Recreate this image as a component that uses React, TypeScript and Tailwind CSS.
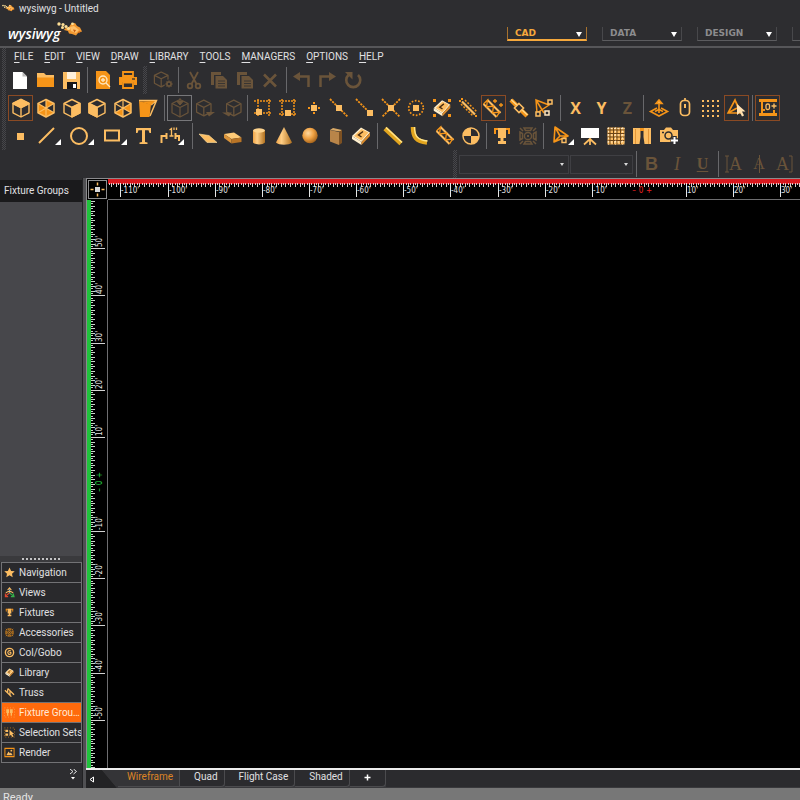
import { useEffect, useState } from "react";
import type { ReactNode } from "react";
import { clsx } from "clsx";

const L = "#fcbd62";
const D = "#f59418";
const M = "#6a543a";
const W = "#ffffff";
const BG = "#2d2d30";

/* ---------- icon primitives ---------- */

function Cube({ c = L, fill = [], sw = 1.4 }: { c?: string; fill?: string[]; sw?: number }) {
  const faces: Record<string, string> = {
    top: "M12 3.5 20 7.5 12 11.5 4 7.5Z",
    left: "M4 7.5 12 11.5V21L4 16.8Z",
    right: "M20 7.5 12 11.5V21L20 16.8Z",
  };
  return (
    <g stroke={c} strokeWidth={sw} strokeLinejoin="round" fill="none">
      {fill.map((f) => (
        <path key={f} d={faces[f]} fill={c} />
      ))}
      <path d="M12 3.5 20 7.5V16.8L12 21 4 16.8V7.5Z" />
      <path d="M4 7.5 12 11.5 20 7.5M12 11.5V21" />
    </g>
  );
}

function Iso({ sectors }: { sectors: string }) {
  return (
    <g strokeLinejoin="round">
      <path d={sectors} fill={D} />
      <path d="M12 3.5 20 7.5V16.8L12 21 4 16.8V7.5Z" stroke={L} strokeWidth="1.5" fill="none" />
      <path d="M12 3.5V21M4 7.5 20 16.8M20 7.5 4 16.8" stroke={L} strokeWidth="1.2" />
    </g>
  );
}

function Dots({ pts, c = D, s = 2 }: { pts: number[][]; c?: string; s?: number }) {
  return (
    <g fill={c}>
      {pts.map(([x, y], i) => (
        <rect key={i} x={x - s / 2} y={y - s / 2} width={s} height={s} />
      ))}
    </g>
  );
}

const Sq = ({ x, y, s = 6 }: { x: number; y: number; s?: number }) => (
  <rect x={x - s / 2} y={y - s / 2} width={s} height={s} fill={L} />
);

const Fly = ({ x = 20 }: { x?: number }) => <path d={`M${x + 6} 15v6h-6z`} fill={W} />;

const Truss = () => (
  <g stroke={L} fill="none">
    <path d="M3.5 7 16.5 20M7.5 3 20.5 16" strokeWidth="2" />
    <path d="M3.5 7 7.500 3 6.500 10 13.500 9 12.500 16 19.500 15 16.500 20" stroke={D} strokeWidth="1.300" />
  </g>
);

const Book = () => (
  <g>
    <path d="M3 12 12 3.500 21 8.500 12.500 18Z" fill="#fff0cf" />
    <path d="M5 12 12.500 5 19.500 8.500 12.500 16.500Z" fill={L} />
    <path d="M3 12 12.500 18V21L3 15Z" fill="#fff0cf" />
    <path d="M12.500 18 21 8.500V12L12.500 21Z" fill="#d98a2c" />
    <path d="M14 7.500 9.500 11l3 2" stroke="#4a2d10" strokeWidth="1.500" fill="none" />
  </g>
);

const Trophy = () => (
  <g>
    <path d="M4 5H20M5 4v6M19 4v6" stroke={D} strokeWidth="2" fill="none" />
    <path d="M8 4h8v10h-2.500v3H16v3H8v-3h2.500v-3H8z" fill={L} />
  </g>
);

const Lamp = ({ c = M }: { c?: string }) => (
  <g stroke={c} fill="none" strokeWidth="1.500">
    <circle cx="12" cy="12" r="3.600" />
    <path d="M12 11v2" strokeWidth="2" />
    <path d="M8 4h8l-1.500 2.500h-5zM8 20h8l-1.500-2.500h-5zM4 8v8l2.500-1.500v-5zM20 8v8l-2.500-1.500v-5z" />
    <path d="M4 4l3 3M20 4l-3 3M4 20l3-3M20 20l-3-3" />
  </g>
);

const Copy = () => (
  <g fill={M}>
    <path d="M4 4h10v3H7v10H4z" />
    <path d="M8.500 8H16l4 4v8.500H8.500z" />
    <path d="M11 13h7M11 15.500h7M11 18h7" stroke={BG} strokeWidth=".8" />
  </g>
);

const Cone = () => (
  <g stroke={D} strokeWidth="1.600" fill="none" strokeLinejoin="round">
    <path d="M5 3 18 12 4 18ZM5 3l5 9-6 6M10 12h8" />
  </g>
);

/* ---------- toolbar icons ---------- */

const icons: Record<string, ReactNode> = {
  new: (
    <g>
      <path d="M4 4h9.500L18 8.500V21H4z" fill={W} />
      <path d="M13.500 4v4.500H18z" fill="#b9b9b9" />
    </g>
  ),
  open: (
    <g>
      <path d="M3 5h7l2 2h8v3H3z" fill={L} />
      <path d="M3 9.500h17V19H3z" fill={D} />
    </g>
  ),
  save: (
    <g>
      <path d="M3 4h17v17H3z" fill={L} />
      <path d="M7 4h9v7H7z" fill="#fff1dc" />
      <path d="M7 14h10v7H7z" fill="#171719" />
      <path d="M13 16h3v4h-3z" fill={W} />
    </g>
  ),
  preview: (
    <g>
      <path d="M5 3h10l4 4v14H5z" fill={D} />
      <circle cx="12" cy="12" r="4" fill="none" stroke="#ffe6bd" strokeWidth="1.400" />
      <path d="M10 12h4M12 10v4M15 15l4 4" stroke="#ffe6bd" strokeWidth="1.400" />
    </g>
  ),
  print: (
    <g>
      <path d="M7 4h10v4H7z" fill="none" stroke={D} strokeWidth="1.800" />
      <path d="M3 9h18v8h-3v-3H6v3H3z" fill={D} />
      <path d="M7 14.500h10V20H7z" fill="none" stroke={D} strokeWidth="1.800" />
      <path d="M16 11h3" stroke={BG} strokeWidth="1.300" />
    </g>
  ),
  boxgear: (
    <g>
      <g transform="translate(0 1) scale(.85)">
        <Cube c={M} />
      </g>
      <circle cx="18" cy="16" r="4.500" fill={BG} />
      <circle cx="18" cy="16" r="2" fill="none" stroke={M} strokeWidth="1.500" />
      <path d="M18 12.500v1.500M18 18v1.500M14.500 16H16M20 16h1.500M15.500 13.500l1 1M19.500 17.500l1 1M20.500 13.500l-1 1M16.500 17.500l-1 1" stroke={M} strokeWidth="1.300" />
    </g>
  ),
  cut: (
    <g stroke={M} strokeWidth="1.800" fill="none">
      <path d="M8 4 14.500 16M16 4 9.500 16" />
      <circle cx="8" cy="18" r="2.300" />
      <circle cx="16" cy="18" r="2.300" />
    </g>
  ),
  copy: <Copy />,
  del: <path d="M6 6.500 18 18.500M18 6.500 6 18.500" stroke={M} strokeWidth="2.600" />,
  undo: (
    <g>
      <path d="M8 8.500h10.500V19" stroke={M} strokeWidth="2.500" fill="none" />
      <path d="M3 8.500 10 4v9z" fill={M} />
    </g>
  ),
  redo: (
    <g>
      <path d="M16 8.500H5.500V19" stroke={M} strokeWidth="2.500" fill="none" />
      <path d="M21 8.500 14 4v9z" fill={M} />
    </g>
  ),
  refresh: (
    <g>
      <path d="M7.500 7A7 7 0 1 0 17 7" stroke={M} strokeWidth="2.600" fill="none" />
      <path d="M4 4h7.500v7.500z" fill={M} />
    </g>
  ),
  cubeTop: <Cube fill={["top"]} />,
  cubeIso: <Iso sectors="M12 3.500 20 7.500 12 12ZM4 7.500 12 12 4 16.800ZM12 12 12 21 4 16.800ZM12 12 20 16.800 12 21Z" />,
  cubeRight: <Cube fill={["right"]} />,
  cubeLeft: <Cube fill={["left"]} />,
  cubeWire: <Iso sectors="M12 12 20 7.500V16.800ZM12 12 4 16.800 12 21Z" />,
  persp: (
    <g>
      <path d="M3 5 15 8.500 13.500 21H4z" fill={D} />
      <path d="M3 4.500H20.500L14 20M15 9l5.500-4.500" stroke={L} strokeWidth="1.500" fill="none" />
      <path d="M4 5.500 15 9l4-4z" fill={D} />
    </g>
  ),
  cubeOff: (
    <g>
      <Cube c={M} sw={1.2} />
      <path d="M9 5.500h6l-3 3.500zM12 2v4" fill={M} stroke={M} />
    </g>
  ),
  cubeOffR: (
    <g>
      <g transform="translate(-1 1) scale(.9)">
        <Cube c={M} />
      </g>
      <path d="M12 16h9l-6 4.500z" fill={M} />
    </g>
  ),
  cubeOffL: (
    <g>
      <g transform="translate(3 1) scale(.9)">
        <Cube c={M} />
      </g>
      <path d="M12 16.500H2l7 4z" fill={M} />
    </g>
  ),
  snapCorner: (
    <g>
      <path d="M7 3v18M18 3v18M3 5h18M3 17h18" stroke={D} strokeWidth="1.500" strokeDasharray="2 1" />
      <Sq x={8} y={16} />
    </g>
  ),
  snapEdge: (
    <g>
      <path d="M6 3v18M18 3v18M3 5h18M3 18h18" stroke={D} strokeWidth="1.500" strokeDasharray="2 1" />
      <Sq x={12} y={17} />
    </g>
  ),
  snapPoint: (
    <g>
      <Sq x={12} y={12} />
      <Dots pts={[[12, 7], [12, 17], [7, 12], [17, 12]]} />
    </g>
  ),
  snapMid: (
    <g>
      <path d="M3 3 21 21" stroke={D} strokeWidth="1.800" strokeDasharray="2.200 1" />
      <Sq x={12} y={12} />
    </g>
  ),
  snapEnd: (
    <g>
      <path d="M3 3 16 16" stroke={D} strokeWidth="1.800" strokeDasharray="2.200 1" />
      <Sq x={17} y={17} />
    </g>
  ),
  snapCross: (
    <g>
      <path d="M3 3 21 21M21 3 3 21" stroke={D} strokeWidth="1.800" strokeDasharray="2.200 1" />
      <Sq x={12} y={12} />
    </g>
  ),
  snapCircle: (
    <g>
      <circle cx="12" cy="12" r="7.300" stroke={D} strokeWidth="1.700" strokeDasharray="1.700 1.600" fill="none" />
      <Sq x={12} y={12} />
    </g>
  ),
  snapBook: (
    <g>
      <g transform="translate(1 1) scale(.92)">
        <Book />
      </g>
      <Dots s={3} pts={[[4.5, 4.5], [19.5, 4.5], [4.5, 19.5], [19.5, 19.5]]} />
    </g>
  ),
  snapTruss: (
    <g>
      <path d="M5 8 17 20M9 4 21 16" stroke={D} strokeWidth="1.500" strokeDasharray="2 1.500" />
      <path d="M6 5.500 19 18.500" stroke={L} strokeWidth="2.200" />
      <Dots pts={[[4, 5], [6, 3], [20, 20]]} />
    </g>
  ),
  trussOn: (
    <g>
      <g transform="translate(-1 1)">
        <Truss />
      </g>
      <path d="M12 5h4M14 3v4M18 9h4M20 7v4" stroke={D} strokeWidth="1.300" />
    </g>
  ),
  pipeSnap: (
    <g>
      <path d="M4 4 20 20" stroke={D} strokeWidth="4.500" />
      <path d="M4 3.500 20.500 19" stroke="#ffd98a" strokeWidth="1.500" />
      <path d="M12 7.500 16.500 12 12 16.500 7.500 12Z" fill={BG} stroke={L} strokeWidth="1.600" />
    </g>
  ),
  lightSnap: (
    <g fill={BG} strokeWidth="1.500">
      <path d="M4 4 17 9 5 17ZM4 4l8 13" stroke={D} />
      <path d="M16 4h4v4h-4zM4 16h4v4H4z" stroke={L} />
      <path d="M13 15h4v4h-4z" stroke="#ffe6bd" />
    </g>
  ),
  level: (
    <g stroke={D} fill="none" strokeWidth="1.600">
      <path d="M10 12 3.500 15.500 12 20 20.500 15.500 14 12" />
      <path d="M12 17V6" />
      <path d="M9 7.500 12 4l3 3.500z" fill={L} />
      <path d="M8 15.500 12 13.500l4 2" />
    </g>
  ),
  mouse: (
    <g stroke={L} fill="none" strokeWidth="1.700">
      <rect x="7.500" y="4.500" width="9" height="15" rx="3.500" />
      <path d="M12 8v4" strokeWidth="2" />
      <path d="M12 2v2" />
    </g>
  ),
  grid: <Dots c={L} s={2} pts={[4, 9, 14, 19].flatMap((x) => [5, 10, 15, 20].map((y) => [x, y]))} />,
  pick: (
    <g>
      <path d="M10 4 3 17h12zM10 4l5 10M3 17l9-5" stroke={D} strokeWidth="1.600" fill="none" />
      <path d="M12 8v11l3-2.500 2 4 2-1-2-4h3.500z" fill="#ffe0b0" />
    </g>
  ),
  trussCount: (
    <g stroke={D} fill="none" strokeWidth="2">
      <path d="M3 4.500h18M3 18.500h18" strokeWidth="3" />
      <path d="M6 4v15M5 14h4M18 14v4" />
      <path d="M15.500 10h5M18 7.500v5" stroke={L} strokeWidth="1.400" />
      <rect x="10" y="8" width="3.500" height="5.500" rx="1.500" stroke={L} strokeWidth="1.300" />
    </g>
  ),
  dot: <Sq x={11.5} y={12.5} s={7} />,
  type: <path d="M4 4h15v5h-1.500l-1-2.700H13V18l2.500.5V20h-8v-1.500L10 18V6.300H6.500L5.500 9H4z" fill={L} />,
  plane: <path d="M3 10 13 11.500 21 18.500H11Z" fill={L} stroke="#ffe0a0" strokeWidth=".6" />,
  slab: (
    <g>
      <path d="M3 10 13 8.500 20.500 13.500 10.500 15Z" fill="#ffcb78" />
      <path d="M3 10 10.500 15v4.500L3 14z" fill="#d9933a" />
      <path d="M10.500 15 20.500 13.500V18L10.500 19.500z" fill="#b87426" />
    </g>
  ),
  cylinder: (
    <g>
      <path d="M6 6.500v12c2 2.500 10 2.500 12 0v-12z" fill="url(#amberH)" />
      <ellipse cx="12" cy="6.500" rx="6" ry="2.200" fill="#ffd48e" />
    </g>
  ),
  cone: <path d="M12 3 4 18.500c3 3 13 3 16 0z" fill="url(#amberH)" />,
  sphere: <circle cx="12" cy="11.500" r="7.700" fill="url(#amberR)" />,
  door: (
    <g>
      <path d="M6 6 9 4 18 6 16 7.500Z" fill="#d8a866" />
      <path d="M6 6l9 2V21L6 17.500z" fill="#b98549" />
      <path d="M15 8l3-2v13l-3 2z" fill="#7d5122" />
    </g>
  ),
  book: <Book />,
  pipe: (
    <g>
      <path d="M4 4.500 20 19.500" stroke="#e2a51e" strokeWidth="4.500" />
      <path d="M5 3.500 21 18.500" stroke="#ffe48c" strokeWidth="1.500" />
    </g>
  ),
  bend: (
    <g fill="none">
      <path d="M6 3c0 10 3 14.500 14 15.500" stroke="#e2a51e" strokeWidth="4.500" />
      <path d="M7.500 3c0 9 3 13 13 14" stroke="#ffe48c" strokeWidth="1.400" />
    </g>
  ),
  truss: <Truss />,
  target: (
    <g>
      <circle cx="12" cy="12" r="8" fill={BG} stroke={L} strokeWidth="1.500" />
      <path d="M12 12V4a8 8 0 0 0-8 8zM12 12v8a8 8 0 0 0 8-8z" fill={L} />
    </g>
  ),
  trophy: <Trophy />,
  lamp: <Lamp />,
  screen: (
    <g>
      <path d="M3 4h18v10H3z" fill={W} />
      <path d="M12 14v7M12 15l-6 5.500M12 15l6 5.500" stroke={L} strokeWidth="1.700" />
    </g>
  ),
  mesh: (
    <g>
      <path d="M3.500 3.500h17v17h-17z" fill={L} />
      <path
        d="M3.500 6h17M3.500 9.500h17M3.500 13h17M3.500 16.500h17M6 3.500v17M9.500 3.500v17M13 3.500v17M16.500 3.500v17"
        stroke="#6b4417"
        strokeWidth="1"
      />
      <path d="M3.500 4.500h17M3.500 11h17M3.500 18h17M4.500 3.500v17M11.500 3.500v17M18.500 3.500v17" stroke="#ffe8c4" strokeWidth="1" strokeDasharray="1.500 1.800" />
    </g>
  ),
  curtain: (
    <g fill={L}>
      <path d="M3 4h7.500v9L9.500 20H3zM13.500 4H21v16h-6.500L13.500 13z" />
      <path d="M10 4h4v3h-4z" fill={D} />
      <path d="M5.500 5v15M18.500 5v15" fill="none" stroke="#d98a2c" strokeWidth=".8" />
    </g>
  ),
  camera: (
    <g>
      <path d="M3 6h4l2-2.500h5L16 6h5v12H3z" fill={L} />
      <circle cx="11.500" cy="11.500" r="3.500" fill="none" stroke={BG} strokeWidth="1.500" />
      <path d="M5 8.500h2" stroke={BG} strokeWidth="1.500" />
      <path d="M17.500 12v8M13.500 16.500h8" stroke={BG} strokeWidth="4.500" />
      <path d="M17.500 13v7M14 16.500h7" stroke={W} strokeWidth="2" />
    </g>
  ),
};

const wideIcons: Record<string, ReactNode> = {
  line: (
    <g>
      <path d="M4 19 19 4" stroke={L} strokeWidth="2" />
      <Fly />
    </g>
  ),
  circle: (
    <g>
      <circle cx="12" cy="12" r="8" stroke={L} strokeWidth="2" fill="none" />
      <Fly x={21} />
    </g>
  ),
  rect: (
    <g>
      <path d="M5 6.500h14v10H5z" stroke={L} strokeWidth="2" fill="none" />
      <Fly x={21} />
    </g>
  ),
  dim: (
    <g stroke={L} strokeWidth="2" fill="none">
      <path d="M2.500 19v-7H8M7.500 9v6M16.500 9v6M16 12h4v5" />
      <path d="M10.500 6 12.500 4.500V12M10.500 12h4M15 3.500v2.500M17.500 3.500v2.500" strokeWidth="1.300" />
      <g stroke="none">
        <Fly x={19} />
      </g>
    </g>
  ),
  spot: (
    <g>
      <g transform="translate(4 0)">
        <Cone />
      </g>
      <path d="M16 14.500h4v4h-4z" fill={BG} stroke={L} strokeWidth="1.400" />
      <Fly x={22} />
    </g>
  ),
};

/* ---------- toolbar parts ---------- */

function Tool({ name, on, frame }: { name: string; on?: boolean; frame?: boolean }) {
  const wide = wideIcons[name];
  return (
    <button
      type="button"
      aria-label={name}
      className={clsx(
        "flex h-[26px] shrink-0 items-center justify-center border",
        wide ? "w-[30px]" : "w-[25px]",
        on ? "border-[#8a4a24]" : frame ? "border-[#77777a]" : "border-transparent",
      )}
    >
      {wide ? (
        <svg viewBox="0 0 30 24" className="h-6 w-[30px] shrink-0">{wide}</svg>
      ) : (
        <svg viewBox="0 0 24 24" className="size-6 shrink-0">{icons[name]}</svg>
      )}
    </button>
  );
}

function Letter({ label, children, off, className }: { label: string; children: ReactNode; off?: boolean; className: string }) {
  return (
    <button
      type="button"
      aria-label={label}
      className={clsx("flex h-[26px] w-[25px] shrink-0 items-center justify-center", off ? "text-[#6a543a]" : "text-[#fcbd62]", className)}
    >
      {children}
    </button>
  );
}

const Group = ({ className, children }: { className: string; children: ReactNode }) => (
  <div className={clsx("flex shrink-0 justify-between", className)}>{children}</div>
);

const Sep = () => (
  <div className="flex w-[6px] shrink-0 justify-center">
    <div className="h-[26px] w-px bg-[#68686b]" />
  </div>
);

const Grip = ({ className }: { className: string }) => (
  <div className={clsx("flex h-full shrink-0 items-center justify-center", className)}>
    <div className="h-full w-1 bg-[conic-gradient(#47474b_25%,transparent_25%_50%,#47474b_50%_75%,transparent_75%)] bg-[size:2px_2px]" />
  </div>
);

const tools = (names: string) => names.split(" ").map((n, i) => <Tool key={i} name={n} />);

function Splash({ className }: { className: string }) {
  return (
    <svg viewBox="0 0 26 16" className={className} aria-hidden="true">
      <path d="M8 6.500l4-1.500 2-3 4-1 2 3 3 1.500 2 4-4 1.500-2 2.500-4-1.500-3-.5-1-2.500-4-1z" fill="#f39a32" />
      <path d="M13 5l4-1 5 4-3 3-5-2z" fill="#ffc069" />
      <path d="M16 7.500l3 .5-1.500 2.500zM21 10l3-1-2 2.500z" fill="#c85d12" />
      <g fill="#ffdf95">
        <circle cx="2" cy="2" r="1.700" />
        <circle cx="6" cy="2.500" r="1.600" />
        <circle cx="5.500" cy="5.500" r="1.500" />
        <circle cx="9" cy="4.500" r="1.600" />
        <circle cx="11.500" cy="6.500" r="1.600" />
        <circle cx="15.500" cy="1.800" r="1.400" />
      </g>
    </svg>
  );
}

const workspaces = ["CAD", "DATA", "DESIGN", "PRES"];

function Workspace({ name, active }: { name: string; active: boolean }) {
  return (
    <label
      className={clsx(
        "flex h-[14px] w-20 shrink-0 items-center border-x pr-1",
        active ? "border-b-2 border-x-[#a8722e] border-b-[#f5a83c]" : "border-b border-x-[#48484b] border-b-[#5c5c5f]",
      )}
    >
      <select
        aria-label={`${name} workspace`}
        className={clsx(
          "h-[13px] min-w-0 flex-1 appearance-none bg-transparent pl-[7px] font-['DejaVu_Sans',sans-serif] text-[9px] leading-[13px] font-bold outline-none",
          active ? "text-[#f5a83c]" : "text-[#8c8c8e]",
        )}
      >
        <option>{name}</option>
      </select>
      <svg viewBox="0 0 6 5" className="mt-[2px] h-[5px] w-[6px]"><path d="M0 0h6L3 5z" fill="#fff" /></svg>
    </label>
  );
}

const menus = ["FILE", "EDIT", "VIEW", "DRAW", "LIBRARY", "TOOLS", "MANAGERS", "OPTIONS", "HELP"];

/* ---------- sidebar ---------- */

const sections: { label: string; icon: ReactNode }[] = [
  { label: "Navigation", icon: <path d="M12 1l3.500 7.500 8 .5-6 5.500L19 22.500 12 18l-7 4.500 1.500-8L.5 9l8-.5z" fill={L} /> },
  {
    label: "Views",
    icon: (
      <g fill="none" strokeWidth="2.400">
        <path d="M12 5v8" stroke="#6cb6e8" />
        <path d="M12 13l9 7M20 14l2 7-7 0" stroke="#35b04a" />
        <path d="M12 13l-9 7M3 14v7h6" stroke="#e0482e" />
        <path d="M4 13q8-7 16 0M8 7l4-5 4 5" stroke={L} />
      </g>
    ),
  },
  { label: "Fixtures", icon: <Trophy /> },
  { label: "Accessories", icon: <Lamp c={D} /> },
  {
    label: "Col/Gobo",
    icon: (
      <g fill="none" stroke={L} strokeWidth="3">
        <circle cx="12" cy="12" r="9" />
        <path d="M15 9a4 4 0 1 0 0 6v-3h-3" strokeWidth="2.400" />
      </g>
    ),
  },
  { label: "Library", icon: <Book /> },
  {
    label: "Truss",
    icon: <path d="M2 7 16 21M8 3 22 17M8 13V5M13 18V9" stroke={L} strokeWidth="2.800" fill="none" />,
  },
  {
    label: "Fixture Groups",
    icon: (
      <g fill={L}>
        <path d="M5 5h6v8H9.500v6h-3v-6H5zM13 5h6v8h-1.500v6h-3v-6H13z" />
        <path d="M1 2h22v20H1z" fill="none" stroke="#ffae5c" strokeWidth="1.500" strokeDasharray="2 4" />
      </g>
    ),
  },
  {
    label: "Selection Sets",
    icon: (
      <g fill={L}>
        <path d="M3 6h6v5H3zM3 14h6v5H3z" />
        <path d="M12 6v14l3-3 3 5 3-1.500-3-5h4z" />
        <path d="M1 2h22v20H1z" fill="none" stroke={D} strokeWidth="1.500" strokeDasharray="2 4" />
      </g>
    ),
  },
  {
    label: "Render",
    icon: (
      <g>
        <path d="M2 3h20v18H2z" fill="none" stroke={D} strokeWidth="2.200" />
        <path d="M5 18l5-8 3 4 2-2 4 6z" fill={L} />
        <circle cx="16" cy="8" r="2" fill={L} />
      </g>
    ),
  },
];

function Sidebar() {
  return (
    <aside className="flex w-[82px] shrink-0 flex-col pt-[2px]">
      <h2 className="h-[22px] bg-[#1a1a1c] pl-1 leading-[21px] whitespace-nowrap">Fixture Groups</h2>
      <div className="min-h-0 flex-1 bg-[#47474b]" />
      <div className="flex h-[6px] items-center justify-center gap-[2px] bg-[#3a3a3d]">
        {Array.from({ length: 10 }, (_, i) => (
          <span key={i} className="size-[2px] bg-[#c4c4c6]" />
        ))}
      </div>
      <ul className="ml-px border-x border-t border-[#727275]">
        {sections.map(({ label, icon }) => {
          const active = label === "Fixture Groups";
          return (
            <li key={label} className="h-5 border-b border-[#727275]">
              <button
                type="button"
                className={clsx("flex h-full w-full items-center gap-1 overflow-hidden pl-[2px] text-left whitespace-nowrap", active ? "bg-[#ff6a0c] text-[#ffe9d6]" : "bg-[#29292c]")}
              >
                <svg viewBox="0 0 24 24" className="size-[11px] shrink-0">{icon}</svg>
                <span className={active ? "truncate" : ""}>{label}</span>
              </button>
            </li>
          );
        })}
      </ul>
      <div className="flex h-[25px] justify-end pt-[6px] pr-[5px]">
        <svg viewBox="0 0 8 12" className="h-3 w-2">
          <path d="M1 0l3 2.500L1 5M4.500 0l3 2.500-3 2.500" stroke="#e8e8e8" fill="none" />
          <path d="M2 8h4L4 10.500z" fill="#fff" />
        </svg>
      </div>
    </aside>
  );
}

/* ---------- rulers ---------- */

const UNIT = 4.715;
const RULER_FONT = "'DejaVu Sans Condensed','DejaVu Sans',sans-serif";

function useWindowSize() {
  const [size, setSize] = useState({ w: window.innerWidth, h: window.innerHeight });
  useEffect(() => {
    const update = () => setSize({ w: window.innerWidth, h: window.innerHeight });
    window.addEventListener("resize", update);
    return () => window.removeEventListener("resize", update);
  }, []);
  return size;
}

const decades = Array.from({ length: 120 }, (_, i) => (i - 60) * 10).filter((v) => v !== 0);

function HRuler({ length }: { length: number }) {
  const x0 = 531;
  const at = (v: number) => Math.round(x0 + v * UNIT);
  const ticks = Array.from({ length: 900 }, (_, i) => i - 225);
  const labels = decades.filter((v) => at(v) > 0 && at(v) < length - 18);
  return (
    <svg className="block h-full w-full" shapeRendering="crispEdges">
      <rect width="100%" height="5" fill="#d8181e" />
      <path d={ticks.map((t) => `M${at(t / 2)} 4v${t % 2 ? 2 : 4}`).join("")} stroke="#dccaca" transform="translate(.5 0)" />
      <path d={labels.map((v) => `M${at(v)} 4v14`).join("")} stroke="#e6e6e6" transform="translate(.5 0)" />
      <g fill="#e2e2e2" fontSize="8" fontFamily={RULER_FONT}>
        {labels.map((v) => (
          <text key={v} x={at(v) + 1} y="14">{`${v}'`}</text>
        ))}
        <g fill="#f02020" textAnchor="middle">
          <text x={x0 - 5} y="14">–</text>
          <text x={x0 + 2} y="14">0</text>
          <text x={x0 + 10} y="14">+</text>
        </g>
      </g>
    </svg>
  );
}

function VRuler({ length }: { length: number }) {
  const y0 = 284;
  const at = (v: number) => Math.round(y0 - v * UNIT);
  const ticks = Array.from({ length: 700 }, (_, i) => 120 - i);
  const labels = decades.filter((v) => at(v) > 16 && at(v) < length - 2);
  return (
    <svg className="block h-full w-full" shapeRendering="crispEdges">
      <rect width="4" height="100%" fill="#20c23c" />
      <path d={ticks.map((t) => `M4 ${at(t / 2)}h${t % 2 ? 2 : 4}`).join("")} stroke="#c8d8c8" transform="translate(0 .5)" />
      <path d={labels.map((v) => `M4 ${at(v)}h14`).join("")} stroke="#d2d2d2" transform="translate(0 .5)" />
      <g fill="#e2e2e2" fontSize="8" fontFamily={RULER_FONT}>
        {labels.map((v) => (
          <text key={v} transform={`translate(15 ${at(v) - 1}) rotate(-90)`}>{`${v}'`}</text>
        ))}
        <g fill="#24d444" textAnchor="middle">
          <text transform={`translate(15 ${y0 + 6}) rotate(-90)`}>–</text>
          <text transform={`translate(15 ${y0 - 1}) rotate(-90)`}>0</text>
          <text transform={`translate(15 ${y0 - 9}) rotate(-90)`}>+</text>
        </g>
      </g>
    </svg>
  );
}

function Canvas() {
  const { w, h } = useWindowSize();
  return (
    <div className="grid min-h-0 flex-1 grid-cols-[21px_1fr] grid-rows-[21px_1fr] border-t border-l border-[#8b8b8e] bg-black">
      <div className="flex items-start justify-start pt-px pl-px">
        <button type="button" aria-label="Origin" className="flex h-[19px] w-[19px] items-center justify-center border border-[#8e8e90]">
          <svg viewBox="0 0 17 17" className="size-[17px] shrink-0">
            <path d="M8.500 1.500v3M8.500 12.500v3M1.500 8.500h3M12.500 8.500h3" stroke={L} strokeWidth="1.500" />
            <path d="M6 6h5v5H6z" fill="#d8d8da" />
          </svg>
        </button>
      </div>
      <div className="min-w-0 overflow-hidden border-b border-[#6e6e70]"><HRuler length={w - 108} /></div>
      <div className="min-h-0 overflow-hidden border-r border-[#6e6e70]"><VRuler length={h - 233} /></div>
      <div />
    </div>
  );
}

const tabs = ["Quad", "Flight Case", "Shaded"];

function ViewTabs() {
  return (
    <div className="flex h-5 shrink-0 items-start border-t-2 border-[#ededed] bg-[#39393c]">
      <button type="button" aria-label="Previous view" className="flex h-[18px] w-[14px] items-center bg-[#222224] pl-[3px]">
        <svg viewBox="0 0 5 7" className="h-[7px] w-[5px]"><path d="M4.500 1v5L1 3.500z" stroke="#fff" fill="none" /></svg>
      </button>
      <svg viewBox="0 0 18 18" className="h-[18px] w-[18px]">
        <path d="M0 0h2L17 18H0z" fill="#222224" />
        <path d="M2 0h16v18h-1z" fill="#343437" />
      </svg>
      <button type="button" className="h-[17px] border-r border-b border-[#4b4b4e] bg-[#343437] pr-[6px] pb-[2px] pl-[9px] leading-[14px] text-[#dd8426]">Wireframe</button>
      {tabs.map((t) => (
        <button key={t} type="button" className="h-[17px] rounded-br-sm border-r border-b border-[#4b4b4e] bg-[#2b2b2e] pr-[6px] pb-[2px] pl-[14px] leading-[14px]">{t}</button>
      ))}
      <button type="button" aria-label="Add view" className="flex h-[17px] w-9 items-center justify-center rounded-br-sm border-r border-b border-[#4b4b4e] bg-[#2b2b2e] pb-px">
        <svg viewBox="0 0 7 7" className="size-[7px]"><path d="M3.500 .5v6M.5 3.500h6" stroke="#fff" strokeWidth="1.500" /></svg>
      </button>
      <div className="h-[17px] flex-1 bg-[#2b2b2e]" />
    </div>
  );
}

function FontSelect({ label, className }: { label: string; className: string }) {
  return (
    <label className={clsx("flex h-[19px] shrink-0 items-center border border-[#3f3f43] pr-1", className)}>
      <select aria-label={label} disabled className="h-4 min-w-0 flex-1 appearance-none bg-transparent outline-none">
        <option></option>
      </select>
      <svg viewBox="0 0 4 3" className="h-[3px] w-1"><path d="M0 0h4L2 3z" fill="#d8d8d8" /></svg>
    </label>
  );
}

export default function App() {
  return (
    <div className="flex h-screen flex-col overflow-hidden bg-[#2d2d30] font-['Roboto','Noto_Sans',sans-serif] text-[10px] leading-[14px] text-[#e0e0e2]">
      <svg className="absolute size-0" aria-hidden="true">
        <defs>
          <linearGradient id="amberH">
            <stop offset="0" stopColor="#f0a548" />
            <stop offset=".35" stopColor="#ffce85" />
            <stop offset="1" stopColor="#b0701f" />
          </linearGradient>
          <radialGradient id="amberR" cx=".38" cy=".35" r=".7">
            <stop offset="0" stopColor="#ffd9a0" />
            <stop offset=".5" stopColor="#f0a244" />
            <stop offset="1" stopColor="#a05f18" />
          </radialGradient>
        </defs>
      </svg>

      <header className="shrink-0 border-b-2 border-[#565659]">
        <div className="flex h-[17px] items-center gap-1 pl-[2px]">
          <Splash className="h-[9px] w-[13px]" />
          <h1>wysiwyg - Untitled</h1>
        </div>
        <div className="flex h-[29px] items-start">
          <div className="flex w-[507px] shrink-0 items-start pl-2">
            <span className="pt-[7px] font-['Open_Sans',sans-serif] text-[14px] leading-5 font-semibold text-white italic">wysiwyg</span>
            <Splash className="mt-[5px] -ml-[3px] h-4 w-[26px]" />
          </div>
          <nav aria-label="Workspaces" className="flex gap-[15px] pt-[10px]">
            {workspaces.map((w) => (
              <Workspace key={w} name={w} active={w === "CAD"} />
            ))}
          </nav>
        </div>
      </header>

      <div className="shrink-0">
        <nav aria-label="Menu" className="flex h-[18px] items-center">
          <Grip className="w-2" />
          <div className="flex gap-[11px] pl-[6px]">
            {menus.map((m) => (
              <button key={m} type="button">
                <u className="underline-offset-2">{m[0]}</u>
                {m.slice(1)}
              </button>
            ))}
          </div>
        </nav>

        <div role="toolbar" aria-label="Standard" className="flex h-7 items-center">
          <Grip className="w-2" />
          <Group className="w-[76px]">{tools("new open save")}</Group>
          <Sep />
          <Group className="w-[50px]">{tools("preview print")}</Group>
          <Grip className="w-[10px]" />
          <Group className="w-[25px]">{tools("boxgear")}</Group>
          <Sep />
          <Group className="w-[102px]">{tools("cut copy copy del")}</Group>
          <Sep />
          <Group className="w-[76px]">{tools("undo redo refresh")}</Group>
        </div>

        <div role="toolbar" aria-label="View and snap" className="flex h-7 items-center">
          <Grip className="w-2" />
          <Group className="w-[153px]">
            <Tool name="cubeTop" on />
            {tools("cubeIso cubeRight cubeLeft cubeWire persp")}
          </Group>
          <Sep />
          <Group className="w-[77px]">
            <Tool name="cubeOff" frame />
            {tools("cubeOffR cubeOffL")}
          </Group>
          <Sep />
          <Group className="w-[307px]">
            {tools("snapCorner snapEdge snapPoint snapMid snapEnd snapCross snapCircle snapBook snapTruss")}
            <Tool name="trussOn" on />
            {tools("pipeSnap lightSnap")}
          </Group>
          <Sep />
          <Group className="w-[77px]">
            <Letter label="Lock X" className="font-['Open_Sans',sans-serif] text-base font-bold">X</Letter>
            <Letter label="Lock Y" className="font-['Open_Sans',sans-serif] text-base font-bold">Y</Letter>
            <Letter label="Lock Z" off className="font-['Open_Sans',sans-serif] text-base font-bold">Z</Letter>
          </Group>
          <Sep />
          <Group className="w-[103px]">
            {tools("level mouse grid")}
            <Tool name="pick" on />
          </Group>
          <Sep />
          <Group className="w-[25px]">
            <Tool name="trussCount" on />
          </Group>
        </div>

        <div role="toolbar" aria-label="Draw" className="flex h-7 items-center">
          <Grip className="w-2" />
          <Group className="w-[181px]">{tools("dot line circle rect type dim")}</Group>
          <Sep />
          <Group className="w-[179px]">{tools("plane slab cylinder cone sphere door book")}</Group>
          <Sep />
          <Group className="w-[103px]">{tools("pipe bend truss target")}</Group>
          <Sep />
          <Group className="w-[51px]">{tools("trophy lamp")}</Group>
          <Sep />
          <Group className="w-[135px]">{tools("spot screen mesh curtain camera")}</Group>
        </div>

        <div role="toolbar" aria-label="Text" className="flex h-7 items-center pl-[451px]">
          <Grip className="w-2" />
          <FontSelect label="Font" className="w-[110px]" />
          <FontSelect label="Font size" className="ml-px w-[63px]" />
          <Sep />
          <Group className="w-[76px]">
            <Letter label="Bold" off className="font-['Liberation_Sans',sans-serif] text-lg font-bold">B</Letter>
            <Letter label="Italic" off className="font-['Liberation_Serif',serif] text-lg italic">I</Letter>
            <Letter label="Underline" off className="font-['Liberation_Serif',serif] text-base font-bold underline underline-offset-2">U</Letter>
          </Group>
          <Sep />
          <Group className="w-[76px]">
            <Letter label="Align left" off className="font-['Liberation_Serif',serif] text-lg">
              <svg viewBox="0 0 4 18" className="h-[18px] w-1 shrink-0"><path d="M0 1h4M2 1v16M0 17h4" stroke={M} fill="none" /></svg>
              A
            </Letter>
            <Letter label="Align center" off className="font-['Liberation_Serif',serif] text-base">
              <span className="block h-[18px] bg-[linear-gradient(#6a543a,#6a543a)] bg-[size:1px_100%] bg-center bg-no-repeat leading-[18px]">A</span>
            </Letter>
            <Letter label="Align right" off className="font-['Liberation_Serif',serif] text-lg">
              A
              <svg viewBox="0 0 4 18" className="h-[18px] w-1 shrink-0"><path d="M0 1h3v16H0" stroke={M} fill="none" /></svg>
            </Letter>
          </Group>
        </div>
      </div>

      <div className="flex min-h-0 flex-1">
        <Sidebar />
        <div className="w-1 shrink-0 border-l border-[#222224] bg-[#505053]" />
        <main className="flex min-w-0 flex-1 flex-col">
          <Canvas />
          <ViewTabs />
        </main>
      </div>

      <footer className="h-3 shrink-0 overflow-hidden bg-[#777777] pl-[3px] text-[11px] leading-[20px] text-[#e4e4e4]">Ready</footer>
    </div>
  );
}
